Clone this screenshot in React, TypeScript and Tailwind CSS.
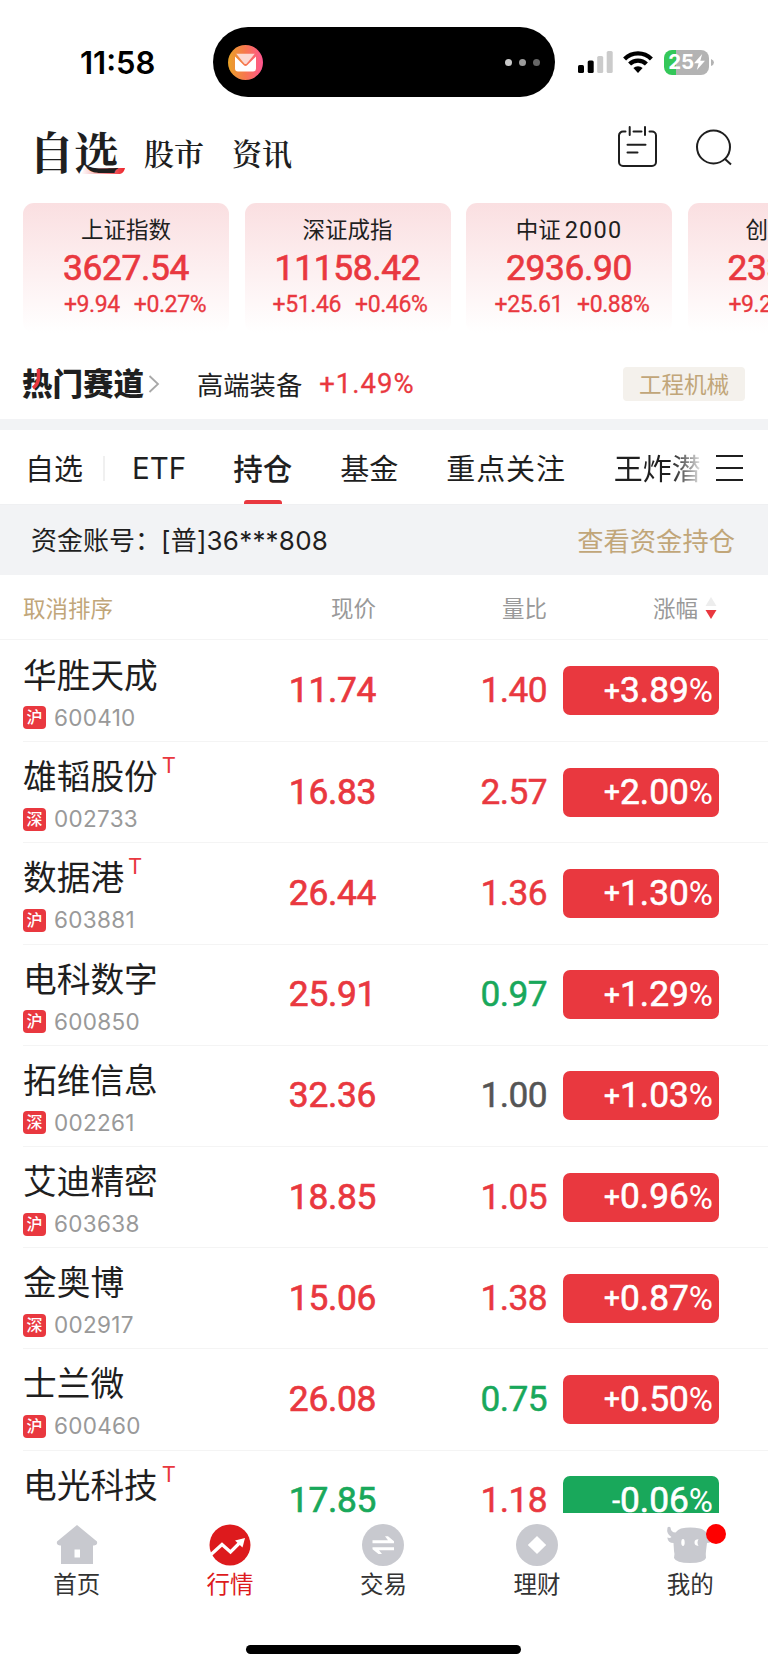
import clsx from 'clsx';

interface Stock {
  name: string;
  code: string;
  market: '沪' | '深';
  margin?: boolean;
  price: string;
  ratio: string;
  change: string;
}

const indices = [
  { name: '上证指数', value: '3627.54', diff: '+9.94', pct: '+0.27%', shift: 'pl-[18px]' },
  { name: '深证成指', value: '11158.42', diff: '+51.46', pct: '+0.46%', shift: 'pl-[5px]' },
  { name: '中证2000', value: '2936.90', diff: '+25.61', pct: '+0.88%', shift: 'pl-[6px]' },
  { name: '创业板指', value: '2339.40', diff: '+9.24', pct: '+0.40%', shift: 'pl-[18px]' },
];

const stocks: Stock[] = [
  { name: '华胜天成', code: '600410', market: '沪', price: '11.74', ratio: '1.40', change: '+3.89' },
  { name: '雄韬股份', code: '002733', market: '深', margin: true, price: '16.83', ratio: '2.57', change: '+2.00' },
  { name: '数据港', code: '603881', market: '沪', margin: true, price: '26.44', ratio: '1.36', change: '+1.30' },
  { name: '电科数字', code: '600850', market: '沪', price: '25.91', ratio: '0.97', change: '+1.29' },
  { name: '拓维信息', code: '002261', market: '深', price: '32.36', ratio: '1.00', change: '+1.03' },
  { name: '艾迪精密', code: '603638', market: '沪', price: '18.85', ratio: '1.05', change: '+0.96' },
  { name: '金奥博', code: '002917', market: '深', price: '15.06', ratio: '1.38', change: '+0.87' },
  { name: '士兰微', code: '600460', market: '沪', price: '26.08', ratio: '0.75', change: '+0.50' },
  { name: '电光科技', code: '', market: '深', margin: true, price: '17.85', ratio: '1.18', change: '-0.06' },
];

const ratioColor = (ratio: string) => {
  const n = Number(ratio);
  if (n > 1) return 'text-[#e9383f]';
  if (n < 1) return 'text-[#19a85b]';
  return 'text-[#555]';
};

function StatusBar() {
  return (
    <div className="flex h-[124px] items-center">
      <div className="w-[213px] pl-[80px] font-['Inter'] text-[31px] font-semibold leading-none text-black">
        11:58
      </div>
      <div className="flex h-[70px] w-[342px] items-center justify-between rounded-full bg-black pl-[15px] pr-[15px]">
        <svg width="35" height="35" viewBox="0 0 35 35">
          <defs>
            <linearGradient id="mail" x1="0" x2="1">
              <stop offset="0" stopColor="#e9a227" />
              <stop offset=".5" stopColor="#f7774f" />
              <stop offset="1" stopColor="#ff5590" />
            </linearGradient>
          </defs>
          <circle cx="17.5" cy="17.5" r="17.5" fill="url(#mail)" />
          <path d="M8.2 8.8h18.6L18.8 18.4a1.8 1.8 0 0 1-2.6 0z" fill="#fcd9d3" />
          <path d="M7 11.4l8.6 8.7a2.7 2.7 0 0 0 3.8 0L28 11.4v12.2a3 3 0 0 1-3 3H10a3 3 0 0 1-3-3z" fill="#fff" />
        </svg>
        <div className="flex gap-[7px]">
          <span className="size-[7px] rounded-full bg-[#c9c9c9]" />
          <span className="size-[7px] rounded-full bg-[#9b9b9b]" />
          <span className="size-[7px] rounded-full bg-[#666]" />
        </div>
      </div>
      <svg className="ml-[23px]" width="35" height="22" viewBox="0 0 35 22">
        <rect x="0" y="14" width="6" height="8" rx="1.6" />
        <rect x="9.7" y="9.5" width="6" height="12.5" rx="1.6" />
        <rect x="19.2" y="5" width="6" height="17" rx="1.6" fill="#cbcbcb" />
        <rect x="28.7" y="0" width="6" height="22" rx="1.6" fill="#cbcbcb" />
      </svg>
      <svg className="ml-[10px]" width="30" height="22" viewBox="0 0 30 22" fill="none" stroke="#000" strokeWidth="4.2">
        <path d="M1.6 7.9a19 19 0 0 1 26.8 0" />
        <path d="M6.6 13a11.9 11.9 0 0 1 16.8 0" />
        <path d="M15 22l-4.6-4.9a6.6 6.6 0 0 1 9.2 0z" fill="#000" stroke="none" />
      </svg>
      <div className="ml-[11px] flex items-center">
        <div className="flex h-[25px] w-[45px] items-center justify-center rounded-[8px] bg-linear-to-r from-[#34c759] from-26% to-[#b3b3b3] to-26% font-['Inter'] text-[20.5px] font-bold leading-none tracking-[-0.3px] text-white">
          25
          <svg width="11" height="16" viewBox="0 0 11 16">
            <path d="M8.2 0L0 9.2h4.600L2.800 16l8.200-9.200H6.300z" fill="#fff" />
          </svg>
        </div>
        <svg className="ml-[2px]" width="3" height="7" viewBox="0 0 3 7">
          <path d="M0 0q3 1.2 3 3.500T0 7z" fill="#b3b3b3" />
        </svg>
      </div>
    </div>
  );
}

function Header() {
  return (
    <div className="flex h-[79px] items-start pl-[31px] font-['Noto_Serif_CJK_SC','Noto_Sans_CJK_SC',serif] text-[#1f1f1f]">
      <div className="relative h-[60px] w-[88px]">
        <svg className="absolute left-[50px] top-[44px]" width="44" height="6" viewBox="0 0 44 6">
          <defs>
            <linearGradient id="swoosh" x1="0" x2="1">
              <stop offset="0" stopColor="#e9383f" stopOpacity="0" />
              <stop offset="1" stopColor="#ed2228" />
            </linearGradient>
          </defs>
          <path d="M0 6L4 0h40q-1 5-5 6z" fill="url(#swoosh)" />
        </svg>
        <span className="relative -ml-[2px] whitespace-nowrap text-[45px] font-bold leading-[54px]">自选</span>
      </div>
      <span className="ml-[25px] text-[30px] font-semibold leading-[57px]">股市</span>
      <span className="ml-[28px] text-[30px] font-semibold leading-[57px]">资讯</span>
      <svg className="ml-[326px] mt-[2px]" width="39" height="41" viewBox="0 0 39 41" fill="none" stroke="#1f1f1f" strokeWidth="2" strokeLinecap="round">
        <path d="M7.5 5.500H5a4 4 0 0 0-4 4V36a4 4 0 0 0 4 4h29a4 4 0 0 0 4-4V9.500a4 4 0 0 0-4-4h-2.500M15.500 5.500h8M11.700 1v8M27 1v8M9.500 18.800h18M9.500 26.500h10" />
      </svg>
      <svg className="ml-[38px] mt-[5px]" width="37" height="37" viewBox="0 0 37 37" fill="none" stroke="#1f1f1f" strokeWidth="2">
        <circle cx="18.5" cy="18" r="16.5" />
        <path d="M29.5 29.500l6.500 6" />
      </svg>
    </div>
  );
}

function IndexCards() {
  return (
    <div className="flex h-[130px] gap-[15.5px] overflow-hidden pl-[23px] text-center">
      {indices.map((item) => (
        <div
          key={item.name}
          className="h-[130px] w-[206px] shrink-0 rounded-[11px] bg-linear-to-b from-[#fadfe1] to-white pt-[9px]"
        >
          <div className="h-[35px] text-[22.5px] leading-[32px] text-[#1f1f1f]">
            {item.name.replace('2000', '')}
            {item.name.endsWith('2000') && <span className="ml-1 font-['Roboto'] text-[23.5px] tracking-[1.2px]">2000</span>}
          </div>
          <div className="h-[40px] font-['Roboto'] text-[35.3px] leading-[43px] tracking-[-0.3px] text-[#e9383f] [-webkit-text-stroke:0.7px]">
            {item.value}
          </div>
          <div className={clsx('flex justify-center gap-[14px] font-[Roboto] text-[23px] leading-[36px] tracking-[-0.4px] text-[#e9383f] [-webkit-text-stroke:0.3px]', item.shift)}>
            <span>{item.diff}</span>
            <span>{item.pct}</span>
          </div>
        </div>
      ))}
    </div>
  );
}

function HotTrack() {
  return (
    <div className="flex h-[86px] items-center pl-[22px] pr-[23px] pt-[15px]">
      <div className="relative -mt-[3px] text-[30.5px] font-black leading-[40px] text-[#1f1f1f]">
        热门赛道
        <svg className="absolute left-[9px] top-[7px]" width="14" height="22" viewBox="0 0 14 22" fill="none" stroke="#e9383f" strokeWidth="3.6">
          <path d="M7.5 0v8q0 7-5.500 11" />
        </svg>
      </div>
      <svg className="ml-[4px]" width="12" height="18" viewBox="0 0 12 18" fill="none" stroke="#a8a8a8" strokeWidth="1.8">
        <path d="M1.5 1l8.500 8-8.500 8" />
      </svg>
      <span className="ml-[37px] text-[26.3px] leading-[40px] text-[#1f1f1f]">高端装备</span>
      <span className="ml-[17px] font-['Roboto'] text-[27.5px] leading-[40px] tracking-[1px] text-[#e9383f] [-webkit-text-stroke:0.3px]">+1.49%</span>
      <span className="ml-auto h-[34px] w-[122px] rounded-[4px] bg-[#f4f1ec] text-center text-[22.5px] leading-[33px] text-[#c1a679]">
        工程机械
      </span>
    </div>
  );
}

function Tabs() {
  return (
    <div className="flex h-[75px] items-start overflow-hidden whitespace-nowrap border-b border-[#eff0f2] pl-[25px] text-[29px] leading-[75px] text-[#1f1f1f]">
      <span>自选</span>
      <span className="ml-[20px] mt-[26px] h-[25px] w-[2px] bg-[#f0f0f0]" />
      <span className="ml-[27px] font-['Inter'] text-[29.5px] leading-[76px]">ETF</span>
      <div className="relative ml-[47px] h-[75px] text-[29.5px] font-medium">
        持仓
        <span className="absolute left-[11px] top-[70px] h-[6px] w-[38px] rounded-full bg-[#e9383f]" />
      </div>
      <span className="ml-[48px]">基金</span>
      <span className="ml-[48px] tracking-[0.9px]">重点关注</span>
      <span className="ml-[48px] w-[92px] overflow-hidden bg-linear-to-r from-[#1f1f1f] from-62% to-white to-98% bg-clip-text text-transparent">
        王炸潜
      </span>
      <div className="ml-[10px] mt-[25px] flex w-[27px] shrink-0 flex-col gap-[10px]">
        <span className="h-[2px] bg-[#1f1f1f]" />
        <span className="h-[2px] bg-[#1f1f1f]" />
        <span className="h-[2px] bg-[#1f1f1f]" />
      </div>
    </div>
  );
}

function StockRow({ stock, first }: { stock: Stock; first: boolean }) {
  const down = stock.change.startsWith('-');
  return (
    <div className="ml-[23px] h-[101.2px]">
      <div className={clsx('flex h-full items-center font-[Roboto]', !first && 'border-t border-[#f4f4f4]')}>
        <div className="w-[219px] pt-[2px] font-['Inter','Noto_Sans_CJK_SC',sans-serif]">
          <div className="-mt-[2px] flex h-[48px] text-[33.7px] leading-[47px] text-[#1f1f1f]">
            {stock.name}
            {stock.margin && <span className="ml-[4px] font-['Inter'] text-[22px] leading-[24px] text-[#e9383f]">T</span>}
          </div>
          <div className="mt-[6px] flex h-[24px] items-center">
            {stock.code && (
              <>
                <span className="size-[23px] rounded-[4px] bg-[#e9383f] text-center text-[16px] font-medium leading-[22px] text-white">
                  {stock.market}
                </span>
                <span className="ml-[8px] text-[22.5px] leading-[24px] tracking-[0.3px] text-[#999]">{stock.code}</span>
              </>
            )}
          </div>
        </div>
        <div className={clsx('w-[134px] text-right text-[35.3px] tracking-[-0.3px] [-webkit-text-stroke:0.7px]', down ? 'text-[#19a85b]' : 'text-[#e9383f]')}>
          {stock.price}
        </div>
        <div className={clsx('w-[171px] text-right text-[35.3px] tracking-[-0.6px] [-webkit-text-stroke:0.5px]', ratioColor(stock.ratio))}>
          {stock.ratio}
        </div>
        <div className={clsx('ml-[16px] flex h-[49px] w-[156px] items-center justify-end rounded-[7px] pr-[6px] text-white', down ? 'bg-[#19a85b]' : 'bg-[#e9383f]')}>
          <span className="text-[28px] leading-none [-webkit-text-stroke:0.6px]">{stock.change[0]}</span>
          <span className="text-[35.3px] leading-none [-webkit-text-stroke:0.6px]">{stock.change.slice(1)}</span>
          <span className="text-[33px] leading-none">%</span>
        </div>
      </div>
    </div>
  );
}

const navItems = [
  {
    label: '首页',
    icon: (
      <path d="M21 1L41 17.500q1 3.500-3 4h-1V40H5V21.500H4q-4-.500-3-4zM18.500 25.500v8h5.500v-8z" fill="#c8c9cf" fillRule="evenodd" />
    ),
  },
  {
    label: '行情',
    active: true,
    icon: (
      <>
        <circle cx="21" cy="21" r="20.5" fill="#dd1a1d" />
        <path d="M2 30.500L13 20.500l8.500 7.500L31 18.500" fill="none" stroke="#fff" strokeWidth="3.2" />
        <path d="M26 16.500L36 14l-2.500 9.500z" fill="#fff" />
      </>
    ),
  },
  {
    label: '交易',
    icon: (
      <>
        <circle cx="21" cy="21" r="21" fill="#c8c9cf" />
        <path d="M10.5 16.300H26l-3-4h3l6 5v2H10.500zM32 23.300v2.900H17l3 3.800h-3.500l-6-4.800v-1.900z" fill="#fff" />
      </>
    ),
  },
  {
    label: '理财',
    icon: (
      <>
        <circle cx="21" cy="21" r="21" fill="#c8c9cf" />
        <path d="M21 12l9.200 9-9.200 9-9.200-9z" fill="#fff" />
      </>
    ),
  },
  {
    label: '我的',
    badge: true,
    icon: (
      <>
        <path
          d="M12 4.500Q21 2.500 31 4.500Q36 6 37.500 9Q42 9 43.500 3Q46 10 41 13Q43 14 45 13.500Q43 19 38 19L37 27Q36.500 30 37 34Q35 39 21 39Q7 39 5 34Q6 30 5 27L4.500 19Q-1 19-1.700 13.500Q1 14.500 2.500 13Q-3 10-1.500 3.500Q0 2 1.500 3.500Q2 8.500 6.500 8.500Q9 5.500 12 4.500z"
          fill="#c8c9cf"
        />
        <ellipse cx="14" cy="18.5" rx="1.7" ry="3.4" fill="#fff" />
        <path d="M29.5 15.300q-4 0-4 3.300t4 3.300q-2-3.300 0-6.600z" fill="#fff" />
      </>
    ),
  },
];

function BottomNav() {
  return (
    <div className="mr-px grid h-[157px] grid-cols-5 content-start bg-white pt-[11px]">
      {navItems.map((item) => (
        <div key={item.label} className="flex flex-col items-center">
          <div className="relative">
            <svg width="42" height="42" viewBox="0 0 42 42" className="overflow-visible">
              {item.icon}
            </svg>
            {item.badge && <span className="absolute left-[37px] top-0 size-[20px] rounded-full bg-[#fe0000]" />}
          </div>
          <span className={clsx('-mt-px text-[23.5px] leading-[36px]', item.active ? 'text-[#dd1a1d]' : 'text-[#333]')}>
            {item.label}
          </span>
        </div>
      ))}
      <div className="col-span-5 mx-auto mt-[44px] h-[9px] w-[275px] rounded-full bg-black" />
    </div>
  );
}

export default function App() {
  return (
    <div className="h-[1670px] w-[768px] overflow-hidden bg-white font-['Noto_Sans_CJK_SC',sans-serif]">
      <StatusBar />
      <Header />
      <IndexCards />
      <HotTrack />
      <div className="h-[11px] bg-[#f2f3f5]" />
      <Tabs />

      {/* Account */}
      <div className="flex h-[70px] items-center justify-between bg-[#f2f3f5] pl-[31px] pr-[33px] text-[26px] text-[#1f1f1f]">
        <div className="flex whitespace-pre pt-px font-['Inter','Noto_Sans_CJK_SC',sans-serif]">
          <span>资金账号：</span>
          <span className="tracking-[0.2px]">[普]36***808</span>
        </div>
        <span className="text-[26.3px] text-[#c1a679]">查看资金持仓</span>
      </div>

      {/* Column titles */}
      <div className="flex h-[65px] items-center border-b border-[#f4f4f4] pl-[23px] pt-px text-[22.5px] text-[#999]">
        <span className="w-[219px] text-[#c1a679]">取消排序</span>
        <span className="w-[134px] text-right">现价</span>
        <span className="w-[171px] text-right">量比</span>
        <span className="w-[151px] text-right">涨幅</span>
        <svg className="ml-[7px]" width="12" height="22" viewBox="0 0 12 22">
          <path d="M6 0l5.500 9h-11z" fill="#ededed" />
          <path d="M6 22l5.500-9h-11z" fill="#e9383f" />
        </svg>
      </div>

      {/* Holdings, last row runs under the nav */}
      <div className="h-[873px] overflow-hidden">
        {stocks.map((stock, i) => (
          <StockRow key={stock.name} stock={stock} first={i === 0} />
        ))}
      </div>
      <BottomNav />
    </div>
  );
}
